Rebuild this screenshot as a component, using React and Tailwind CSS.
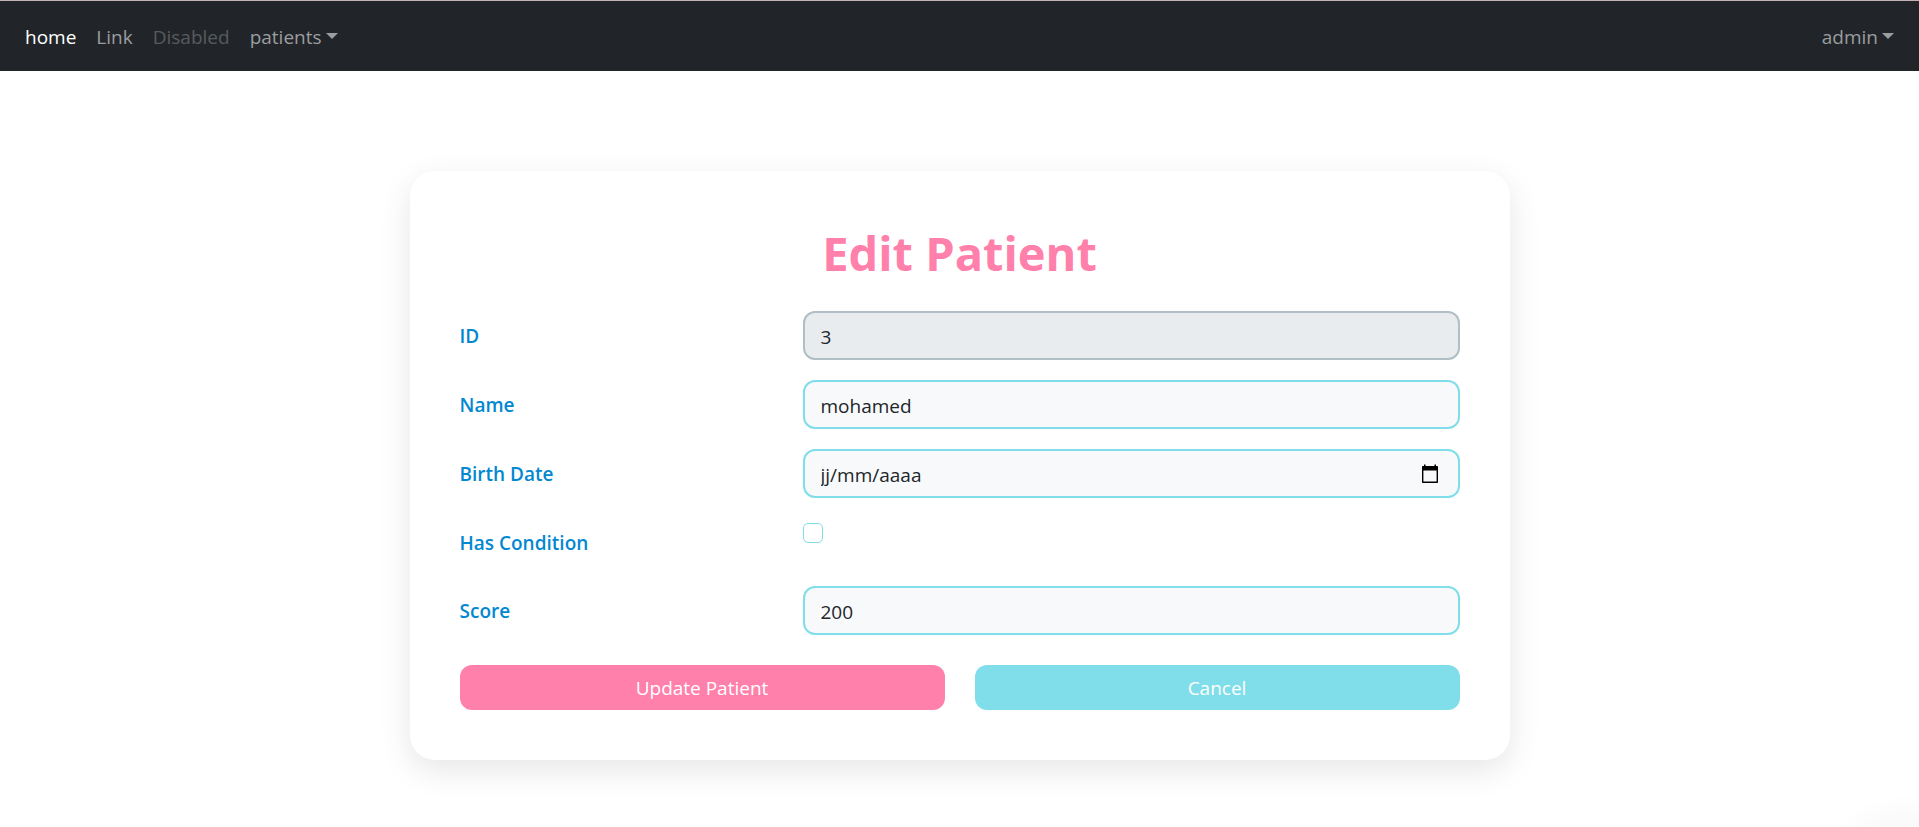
import { useState } from "react";

function NavLink({ children, className, caret }) {
  return (
    <a href="#" className={`flex items-center gap-1 ${className}`}>
      {children}
      {caret && (
        <svg viewBox="0 0 12 6" className="mb-0.5 h-1.5 w-3 fill-current" aria-hidden="true">
          <path d="M0 0h12L6 6z" />
        </svg>
      )}
    </a>
  );
}

function Row({ id, label, short, children }) {
  return (
    <div className={`grid grid-cols-[343px_1fr] ${short ? "h-12" : "h-[49px]"}`}>
      <label htmlFor={id} className="flex h-[49px] items-center font-semibold text-[#0288d1]">
        {label}
      </label>
      <div className="relative">{children}</div>
    </div>
  );
}

const fieldClass =
  "h-[49px] w-full rounded-xl border-2 border-[#80deea] bg-[#f8f9fb] px-4 pt-0.5 text-[#212529] placeholder:text-[#212529] outline-none";

export default function App() {
  const [name, setName] = useState("mohamed");
  const [birthDate, setBirthDate] = useState("");
  const [score, setScore] = useState("200");

  return (
    <div className="flex min-h-screen flex-col bg-white bg-[radial-gradient(ellipse_76px_52px_at_calc(100%-14px)_calc(100%+20px),#f5f5f5,#ffffff)] font-['Open_Sans',sans-serif] text-[19px] leading-[30px]">
      <nav className="flex h-[71px] items-center justify-between border-t border-[#c4b1b6] bg-[#212529] px-[25px] pt-0.5">
        <div className="flex items-center gap-5">
          <NavLink className="text-white">home</NavLink>
          <NavLink className="text-[#9b9d9f]">Link</NavLink>
          <NavLink className="text-[#585b5e]">Disabled</NavLink>
          <NavLink className="text-[#9b9d9f]" caret>patients</NavLink>
        </div>
        <NavLink className="text-[#9b9d9f]" caret>admin</NavLink>
      </nav>

      <main className="px-6 pt-[100px] pb-16">
        <form
          className="mx-auto max-w-[1100px] rounded-[25px] bg-white p-[50px] shadow-[0_10px_32px_rgba(0,0,0,0.1)]"
          onSubmit={(e) => e.preventDefault()}
        >
          <h1 className="mb-7 pt-0.5 text-center text-[47px] leading-[60px] font-bold text-[#ff80ab]">
            Edit Patient
          </h1>
          <div className="flex flex-col gap-5">
            <Row id="patient-id" label="ID">
              <input
                id="patient-id"
                type="text"
                value="3"
                disabled
                className="h-[49px] w-full rounded-xl border-2 border-[#b0bec5] bg-[#e8ecef] px-4 pt-0.5 text-[#212529]"
              />
            </Row>
            <Row id="name" label="Name">
              <input id="name" type="text" value={name} onChange={(e) => setName(e.target.value)} className={fieldClass} />
            </Row>
            <Row id="birth-date" label="Birth Date">
              <input
                id="birth-date"
                type="text"
                placeholder="jj/mm/aaaa"
                value={birthDate}
                onChange={(e) => setBirthDate(e.target.value)}
                className={fieldClass}
              />
              <button type="button" aria-label="Open calendar" className="absolute inset-y-0 right-[21px] flex items-center">
                <svg viewBox="0 0 18 20" className="h-5 w-[18px]" aria-hidden="true">
                  <path
                    fillRule="evenodd"
                    d="M3 .5h1.5V2h9V.5H15V2h1c.6 0 1 .4 1 1v15c0 .6-.4 1-1 1H2c-.6 0-1-.4-1-1V3c0-.6.4-1 1-1h1zM2.4 6.5v11.1h13.2V6.5z"
                  />
                </svg>
              </button>
            </Row>
            <Row id="has-condition" label="Has Condition" short>
              <input
                id="has-condition"
                type="checkbox"
                className="mt-[5px] block size-5 appearance-none rounded-[5px] border border-[#80deea] bg-white checked:bg-[#80deea]"
              />
            </Row>
            <Row id="score" label="Score">
              <input id="score" type="text" inputMode="numeric" value={score} onChange={(e) => setScore(e.target.value)} className={fieldClass} />
            </Row>
          </div>
          <div className="mt-[30px] grid grid-cols-2 gap-[30px] text-white">
            <button type="submit" className="h-[45px] rounded-xl bg-[#ff80ab]">Update Patient</button>
            <button type="button" className="h-[45px] rounded-xl bg-[#80deea]">Cancel</button>
          </div>
        </form>
      </main>
    </div>
  );
}
